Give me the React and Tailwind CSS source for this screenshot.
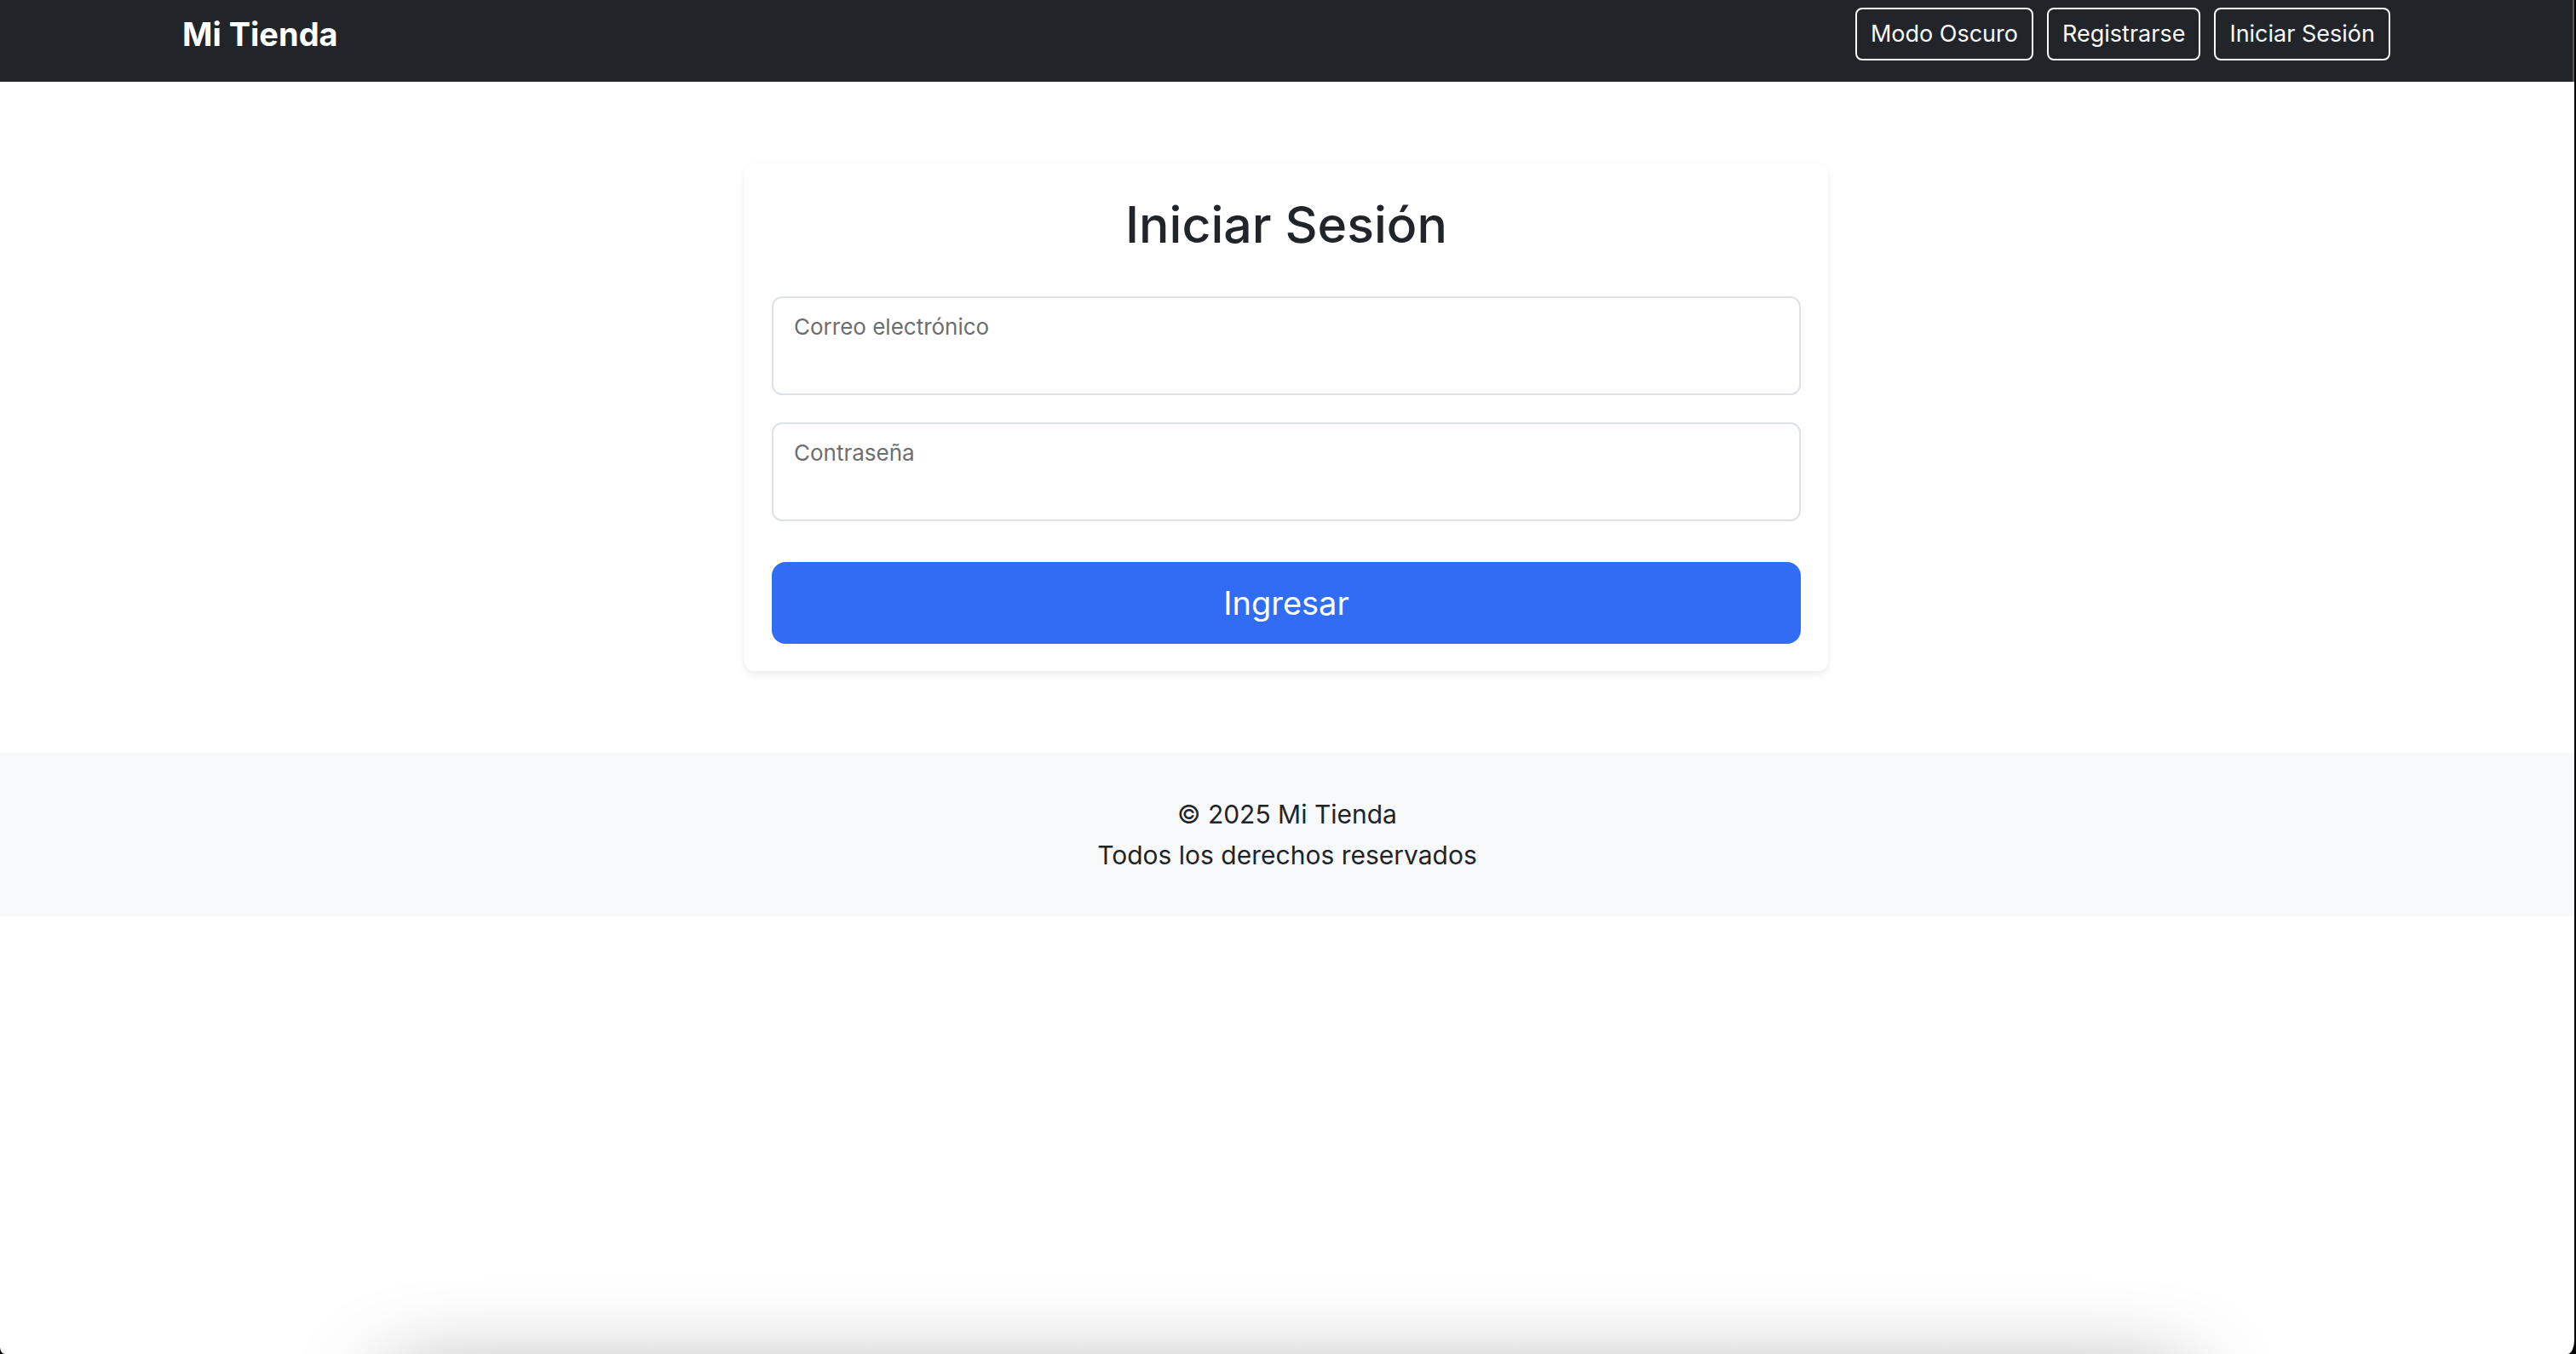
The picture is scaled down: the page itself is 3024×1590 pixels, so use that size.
const fields = [
  { id: "email", label: "Correo electrónico", type: "email" },
  { id: "password", label: "Contraseña", type: "password" },
];

function NavButton({ children }) {
  return (
    <button
      type="button"
      className="rounded-lg border-2 border-[#f8f9fa] px-4 py-2 text-[27px] leading-[42px] text-[#f8f9fa]"
    >
      {children}
    </button>
  );
}

function Header() {
  return (
    <header className="border-r-2 border-[#555555] bg-[#212529] pt-[9px] pb-[25px]">
      <div className="mx-auto flex max-w-[2640px] items-center justify-between px-6">
        <a href="#" className="text-[38px] leading-[60px] font-bold text-white">
          Mi Tienda
        </a>
        <nav className="flex gap-4">
          <NavButton>Modo Oscuro</NavButton>
          <NavButton>Registrarse</NavButton>
          <NavButton>Iniciar Sesión</NavButton>
        </nav>
      </div>
    </header>
  );
}

function Field({ id, label, type }) {
  return (
    <div className="relative">
      <input
        id={id}
        type={type}
        className="block h-[116px] w-full rounded-xl border-2 border-[#dee2e6] bg-white px-6 pt-12 pb-4 text-[30px] outline-none"
      />
      <label
        htmlFor={id}
        className="pointer-events-none absolute top-4 left-[26px] text-[26px] leading-10 text-[#6c6e70]"
      >
        {label}
      </label>
    </div>
  );
}

export default function App() {
  return (
    <div className="min-h-screen bg-black pr-[2px] font-['Inter',sans-serif] text-[#212529]">
      <div className="relative min-h-screen overflow-hidden rounded-br-[8px_16px] rounded-bl-[6px_8px] bg-white">
        <Header />
        <div className="pr-[2px]">
          <main className="mx-auto max-w-[2640px] py-24">
            <form className="mx-auto w-1/2 max-w-[1272px] rounded-xl bg-white p-8 shadow-[0_4px_8px_rgba(0,0,0,0.075)]">
              <h1 className="mb-11 text-center text-[59px] leading-[80px] font-medium">
                Iniciar Sesión
              </h1>
              <div className="flex flex-col gap-8">
                {fields.map((f) => (
                  <Field key={f.id} {...f} />
                ))}
              </div>
              <button
                type="submit"
                className="mt-12 block w-full rounded-2xl bg-[#316cf4] py-[18px] text-[38px] leading-[60px] text-white"
              >
                Ingresar
              </button>
            </form>
          </main>
        </div>
        <footer className="bg-[#f8f9fb] py-12 text-center text-[30px] leading-[48px]">
          <p>© 2025 Mi Tienda</p>
          <p>Todos los derechos reservados</p>
        </footer>
        <div className="pointer-events-none absolute inset-x-[455px] -bottom-32 h-24 rounded-3xl shadow-[0_0_110px_rgba(0,0,0,0.42)]" />
      </div>
    </div>
  );
}
